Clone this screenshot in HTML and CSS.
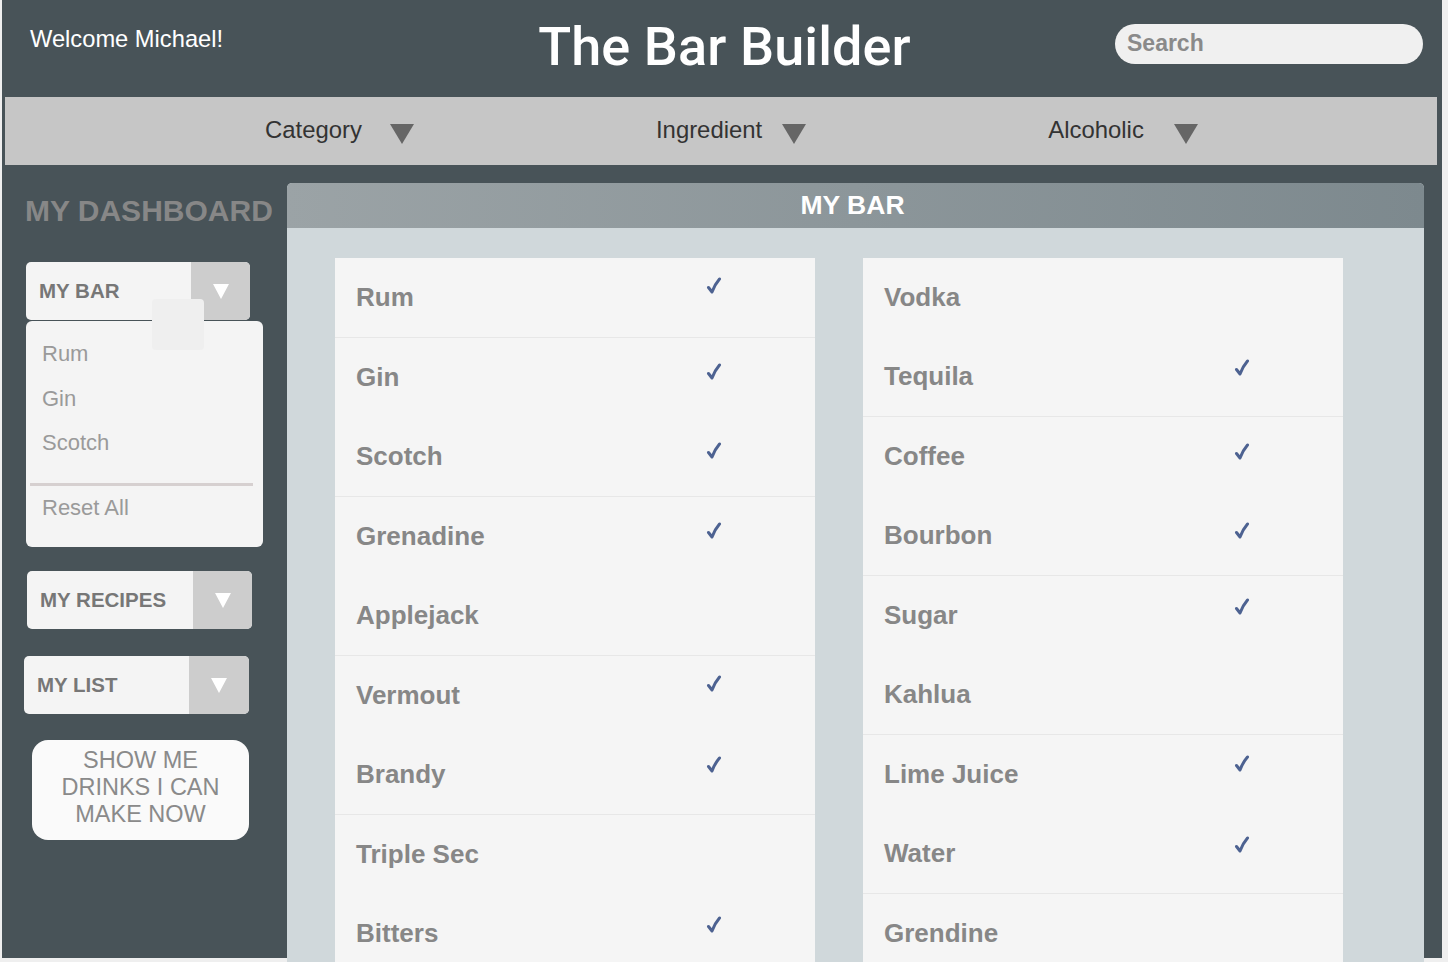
FILE: index.html
```html
<!DOCTYPE html>
<html lang="en">
<head>
<meta charset="utf-8">
<title>The Bar Builder</title>
<link rel="stylesheet" href="styles.css">
</head>
<body>
<div class="frame">
  <header class="header">
    <div class="welcome">Welcome Michael!</div>
    <h1 class="title">The Bar Builder</h1>
    <div class="search-wrap"><div class="search">Search</div></div>
  </header>

  <nav class="nav">
    <div class="nav-item gap-a"><span>Category</span><svg class="nav-tri" width="24" height="20" viewBox="0 0 24 20"><polygon points="0,0 24,0 12,20" fill="#666"/></svg></div>
    <div class="nav-item gap-b"><span>Ingredient</span><svg class="nav-tri" width="24" height="20" viewBox="0 0 24 20"><polygon points="0,0 24,0 12,20" fill="#666"/></svg></div>
    <div class="nav-item gap-c"><span>Alcoholic</span><svg class="nav-tri" width="24" height="20" viewBox="0 0 24 20"><polygon points="0,0 24,0 12,20" fill="#666"/></svg></div>
  </nav>

  <div class="main">
    <aside class="sidebar">
      <h2 class="dash-title">MY DASHBOARD</h2>

      <div class="dd dd-bar">
        <span class="dd-label">MY BAR</span>
        <span class="dd-arrow"><svg width="16" height="15" viewBox="0 0 16 15"><polygon points="0,0 16,0 8,15" fill="#fff"/></svg></span>
      </div>
      <div class="dd-menu">
        <div class="dd-item">Rum</div>
        <div class="dd-item">Gin</div>
        <div class="dd-item">Scotch</div>
        <div class="dd-sep"></div>
        <div class="dd-item">Reset All</div>
      </div>
      <div class="ghost"></div>

      <div class="dd dd-recipes">
        <span class="dd-label">MY RECIPES</span>
        <span class="dd-arrow"><svg width="16" height="15" viewBox="0 0 16 15"><polygon points="0,0 16,0 8,15" fill="#fff"/></svg></span>
      </div>

      <div class="dd dd-list">
        <span class="dd-label">MY LIST</span>
        <span class="dd-arrow"><svg width="16" height="15" viewBox="0 0 16 15"><polygon points="0,0 16,0 8,15" fill="#fff"/></svg></span>
      </div>

      <div class="show-btn">
        <span>SHOW ME</span>
        <span>DRINKS I CAN</span>
        <span>MAKE NOW</span>
      </div>
    </aside>

    <section class="panel">
      <div class="panel-head">MY BAR</div>
      <div class="panel-body">
        <div class="col">
          <div class="row sep"><span class="name">Rum</span><svg class="check up" width="16" height="18" viewBox="0 0 16 18"><path d="M2.5 10.5 L6 15 C8 9.5 10.5 5.5 13.5 2" fill="none" stroke="#4d6291" stroke-width="3" stroke-linecap="round" stroke-linejoin="round"/></svg></div>
          <div class="row"><span class="name">Gin</span><svg class="check low" width="16" height="18" viewBox="0 0 16 18"><path d="M2.5 10.5 L6 15 C8 9.5 10.5 5.5 13.5 2" fill="none" stroke="#4d6291" stroke-width="3" stroke-linecap="round" stroke-linejoin="round"/></svg></div>
          <div class="row sep"><span class="name">Scotch</span><svg class="check low" width="16" height="18" viewBox="0 0 16 18"><path d="M2.5 10.5 L6 15 C8 9.5 10.5 5.5 13.5 2" fill="none" stroke="#4d6291" stroke-width="3" stroke-linecap="round" stroke-linejoin="round"/></svg></div>
          <div class="row"><span class="name">Grenadine</span><svg class="check low" width="16" height="18" viewBox="0 0 16 18"><path d="M2.5 10.5 L6 15 C8 9.5 10.5 5.5 13.5 2" fill="none" stroke="#4d6291" stroke-width="3" stroke-linecap="round" stroke-linejoin="round"/></svg></div>
          <div class="row sep"><span class="name">Applejack</span></div>
          <div class="row"><span class="name">Vermout</span><svg class="check up" width="16" height="18" viewBox="0 0 16 18"><path d="M2.5 10.5 L6 15 C8 9.5 10.5 5.5 13.5 2" fill="none" stroke="#4d6291" stroke-width="3" stroke-linecap="round" stroke-linejoin="round"/></svg></div>
          <div class="row sep"><span class="name">Brandy</span><svg class="check" width="16" height="18" viewBox="0 0 16 18"><path d="M2.5 10.5 L6 15 C8 9.5 10.5 5.5 13.5 2" fill="none" stroke="#4d6291" stroke-width="3" stroke-linecap="round" stroke-linejoin="round"/></svg></div>
          <div class="row"><span class="name">Triple Sec</span></div>
          <div class="row"><span class="name">Bitters</span><svg class="check" width="16" height="18" viewBox="0 0 16 18"><path d="M2.5 10.5 L6 15 C8 9.5 10.5 5.5 13.5 2" fill="none" stroke="#4d6291" stroke-width="3" stroke-linecap="round" stroke-linejoin="round"/></svg></div>
        </div>
        <div class="col">
          <div class="row"><span class="name">Vodka</span></div>
          <div class="row sep"><span class="name">Tequila</span><svg class="check" width="16" height="18" viewBox="0 0 16 18"><path d="M2.5 10.5 L6 15 C8 9.5 10.5 5.5 13.5 2" fill="none" stroke="#4d6291" stroke-width="3" stroke-linecap="round" stroke-linejoin="round"/></svg></div>
          <div class="row"><span class="name">Coffee</span><svg class="check low" width="16" height="18" viewBox="0 0 16 18"><path d="M2.5 10.5 L6 15 C8 9.5 10.5 5.5 13.5 2" fill="none" stroke="#4d6291" stroke-width="3" stroke-linecap="round" stroke-linejoin="round"/></svg></div>
          <div class="row sep"><span class="name">Bourbon</span><svg class="check low" width="16" height="18" viewBox="0 0 16 18"><path d="M2.5 10.5 L6 15 C8 9.5 10.5 5.5 13.5 2" fill="none" stroke="#4d6291" stroke-width="3" stroke-linecap="round" stroke-linejoin="round"/></svg></div>
          <div class="row"><span class="name">Sugar</span><svg class="check" width="16" height="18" viewBox="0 0 16 18"><path d="M2.5 10.5 L6 15 C8 9.5 10.5 5.5 13.5 2" fill="none" stroke="#4d6291" stroke-width="3" stroke-linecap="round" stroke-linejoin="round"/></svg></div>
          <div class="row sep"><span class="name">Kahlua</span></div>
          <div class="row"><span class="name">Lime Juice</span><svg class="check up" width="16" height="18" viewBox="0 0 16 18"><path d="M2.5 10.5 L6 15 C8 9.5 10.5 5.5 13.5 2" fill="none" stroke="#4d6291" stroke-width="3" stroke-linecap="round" stroke-linejoin="round"/></svg></div>
          <div class="row sep"><span class="name">Water</span><svg class="check" width="16" height="18" viewBox="0 0 16 18"><path d="M2.5 10.5 L6 15 C8 9.5 10.5 5.5 13.5 2" fill="none" stroke="#4d6291" stroke-width="3" stroke-linecap="round" stroke-linejoin="round"/></svg></div>
          <div class="row"><span class="name">Grendine</span></div>
        </div>
      </div>
    </section>
  </div>
</div>
</body>
</html>
```

FILE: styles.css
```css
html, body {
  margin: 0;
  padding: 0;
}
body {
  background: #efefef;
  height: 962px;
  overflow: hidden;
  font-family: "Liberation Sans", Arial, sans-serif;
}
.frame {
  width: 1440px;
  height: 958px;
  margin-left: 2px;
  background: #485358;
}

/* header */
.header {
  height: 97px;
  display: grid;
  grid-template-columns: 1fr auto 1fr;
  align-items: start;
}
.welcome {
  color: #fff;
  font-size: 23.7px;
  line-height: 23.7px;
  padding-top: 28px;
  padding-left: 28px;
}
.title {
  margin: 0 0 0 5px;
  padding-top: 20px;
  font-family: Roboto, "Liberation Sans", sans-serif;
  font-weight: 500;
  font-size: 54px;
  line-height: 54px;
  letter-spacing: 0.1px;
  color: #fff;
}
.search-wrap {
  display: flex;
  justify-content: flex-end;
  padding-top: 24px;
  padding-right: 19px;
}
.search {
  width: 296px;
  height: 40px;
  padding-left: 12px;
  border-radius: 20px;
  background: #f0f0f0;
  color: #8a8a8a;
  font-weight: bold;
  font-size: 23px;
  line-height: 38px;
}

/* nav */
.nav {
  height: 68px;
  margin: 0 5px 0 3px;
  background: #c6c6c6;
  display: flex;
  align-items: center;
  gap: 242px;
  padding-left: 260px;
}
.nav-item {
  display: flex;
  align-items: center;
  color: #333;
  font-size: 23.9px;
  margin-top: -3px;
}
.gap-a { gap: 28px; }
.gap-b { gap: 20px; }
.gap-c { gap: 30px; }
.nav-tri {
  display: block;
  margin-top: 8px;
}

/* main */
.main {
  display: flex;
  align-items: flex-start;
}
.sidebar {
  position: relative;
  width: 285px;
  flex: none;
  display: flex;
  flex-direction: column;
  align-items: flex-start;
  padding-top: 31px;
}
.dash-title {
  margin: 0 0 0 23px;
  font-size: 30px;
  line-height: 30px;
  font-weight: bold;
  color: #878787;
}
.dd {
  display: flex;
  height: 58px;
  width: 224px;
  border-radius: 5px;
  background: #f4f4f4;
  overflow: hidden;
}
.dd-label {
  flex: 1;
  display: flex;
  align-items: center;
  padding-left: 13px;
  padding-bottom: 1px;
  font-weight: bold;
  font-size: 20.5px;
  color: #777;
}
.dd-arrow {
  width: 59px;
  background: #cdcdcd;
  display: flex;
  align-items: center;
  justify-content: center;
}
.dd-bar {
  margin: 36px 0 0 24px;
}
.dd-recipes {
  margin: 24px 0 0 25px;
  width: 225px;
}
.dd-list {
  margin: 27px 0 0 22px;
  width: 225px;
}
.dd-list .dd-arrow {
  width: 60px;
}
.dd-menu {
  margin: 1px 0 0 24px;
  width: 237px;
  padding: 11px 0 17px;
  background: #f4f4f4;
  border-radius: 6px;
}
.dd-item {
  padding-left: 16px;
  font-size: 22px;
  line-height: 44.5px;
  color: #9a9a9a;
}
.dd-sep {
  height: 3px;
  margin: 17px 10px 0 4px;
  background: #d6d0d0;
}
.ghost {
  position: absolute;
  left: 150px;
  top: 134px;
  width: 52px;
  height: 51px;
  border-radius: 4px;
  background: #efefef;
}
.show-btn {
  margin: 26px 0 0 30px;
  width: 217px;
  height: 100px;
  box-sizing: border-box;
  padding-bottom: 6px;
  border-radius: 16px;
  background: #fafafa;
  display: flex;
  flex-direction: column;
  align-items: center;
  justify-content: center;
  font-size: 23.5px;
  line-height: 27px;
  color: #8a8a8a;
}

/* panel */
.panel {
  width: 1137px;
  flex: none;
  margin-top: 18px;
  border-radius: 5px 5px 0 0;
  overflow: hidden;
  background: #d0d8db;
}
.panel-head {
  height: 45px;
  box-sizing: border-box;
  padding-right: 6px;
  background: linear-gradient(to right, #9ba3a6, #7d898e);
  color: #fff;
  font-weight: bold;
  font-size: 26.5px;
  line-height: 45px;
  text-align: center;
}
.panel-body {
  display: flex;
  gap: 48px;
  padding: 30px 0 0 48px;
}
.col {
  width: 480px;
  background: #f5f5f5;
}
.row {
  height: 79.5px;
  box-sizing: border-box;
  display: flex;
  align-items: center;
  padding-left: 21px;
}
.row.sep {
  border-bottom: 1.5px solid #e7e7e7;
}
.name {
  width: 350px;
  font-weight: bold;
  font-size: 26px;
  color: #878787;
}
.check {
  display: block;
  margin-bottom: 18px;
}
.check.low {
  margin-bottom: 10px;
}
.check.up {
  margin-bottom: 22px;
}
```
